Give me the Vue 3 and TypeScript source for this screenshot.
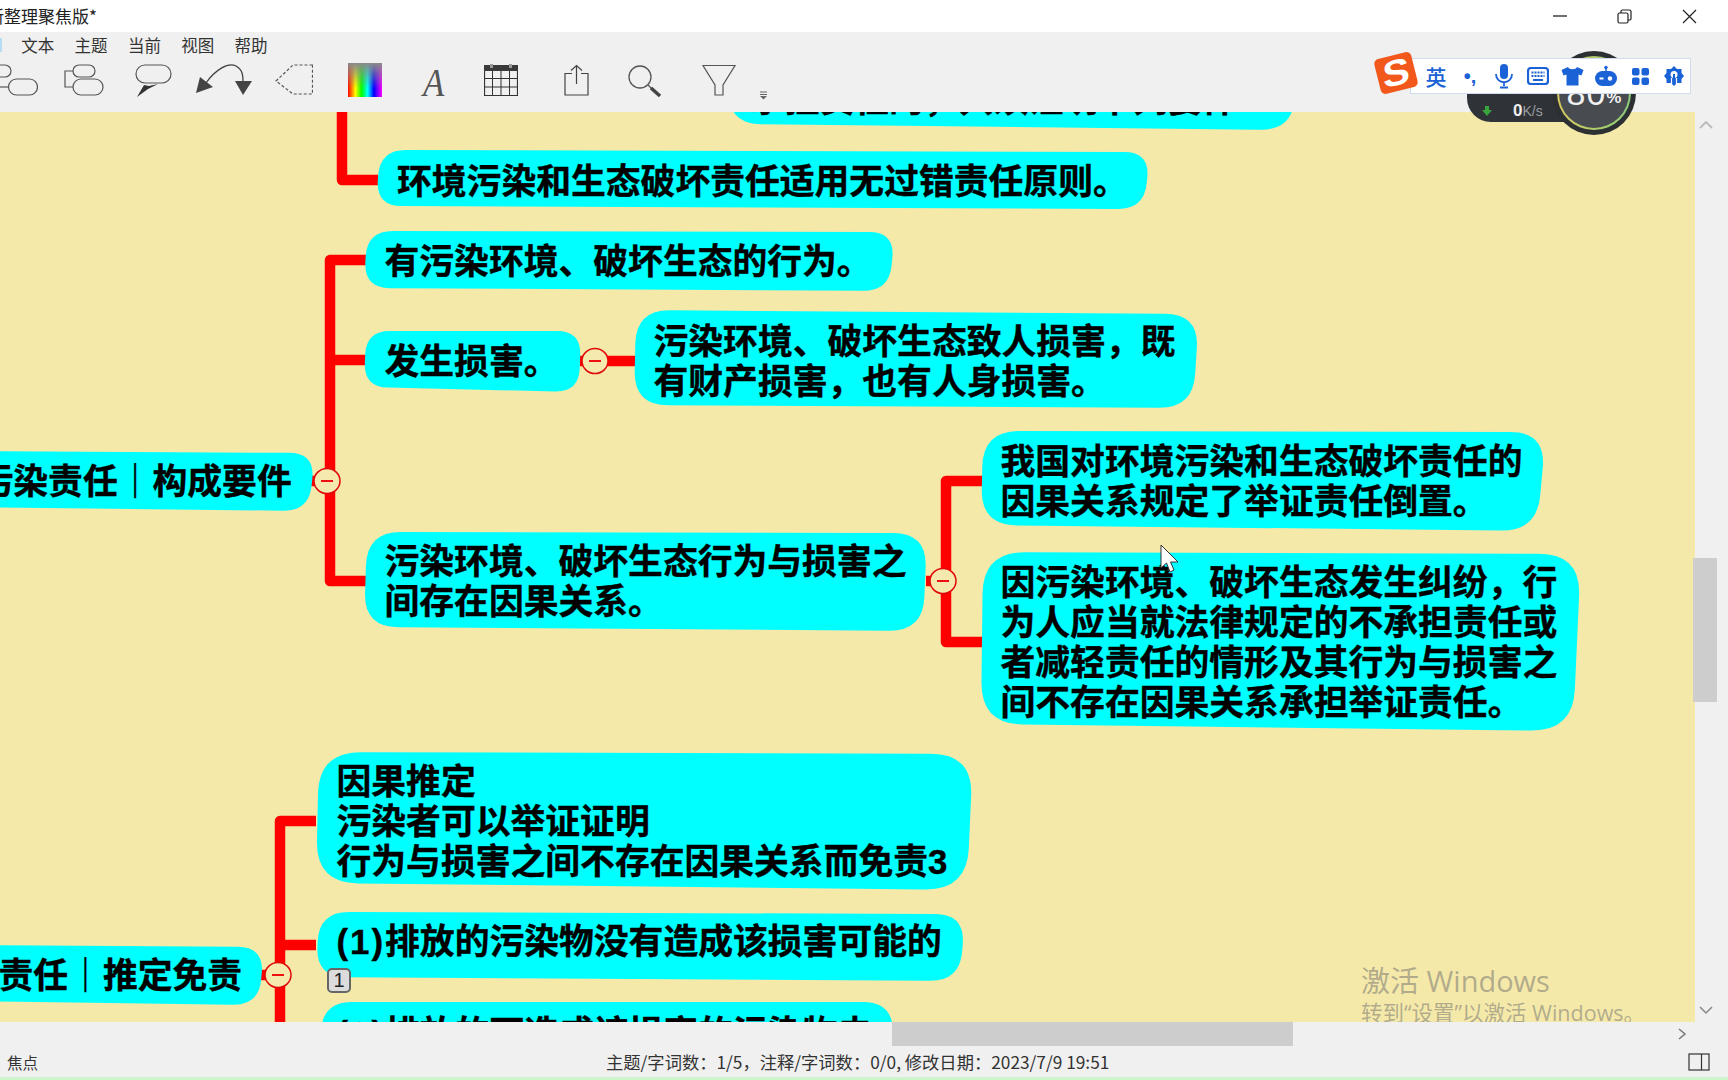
<script setup lang="ts">
interface Topic {
  id: string
  c: number[]
  r: number
  x: number
  y: number
  lead?: string
  lines: string[]
}

const topics: Topic[] = [
  { id: 't0', c: [728, 70, 1295, 70, 1294, 130, 728, 124], r: 34, x: 750, y: 100, lines: ['承担责任的，只须证明下列要件'] },
  { id: 'a', c: [380, 150, 1150, 152, 1144, 209, 376, 206], r: 26, x: 397, y: 182, lines: ['环境污染和生态破坏责任适用无过错责任原则。'] },
  { id: 'b', c: [367, 231, 895, 232, 889, 291, 364, 288], r: 26, x: 384.5, y: 262, lines: ['有污染环境、破坏生态的行为。'] },
  { id: 'c', c: [366, 331, 581, 331, 579, 392, 364, 387], r: 24, x: 384.5, y: 362, lines: ['发生损害。'] },
  { id: 'd', c: [636, 310, 1199, 314, 1193, 408, 634, 405], r: 34, x: 653.5, y: 342, lines: ['污染环境、破坏生态致人损害，既', '有财产损害，也有人身损害。'] },
  { id: 'e', c: [-40, 451, 315, 453, 309, 511, -40, 507], r: 26, x: -21.5, y: 482, lines: ['污染责任｜构成要件'] },
  { id: 'f', c: [367, 532, 927, 533, 923, 631, 364, 627], r: 34, x: 384.5, y: 562, lines: ['污染环境、破坏生态行为与损害之', '间存在因果关系。'] },
  { id: 'g', c: [983, 431, 1546, 432, 1537, 531, 981, 525], r: 36, x: 1000.5, y: 462, lines: ['我国对环境污染和生态破坏责任的', '因果关系规定了举证责任倒置。'] },
  { id: 'h', c: [983, 552, 1581, 554, 1573, 731, 981, 724], r: 42, x: 1000.5, y: 583, lines: ['因污染环境、破坏生态发生纠纷，行', '为人应当就法律规定的不承担责任或', '者减轻责任的情形及其行为与损害之', '间不存在因果关系承担举证责任。'] },
  { id: 'i', c: [319, 752, 973, 754, 967, 890, 316, 883], r: 42, x: 336.5, y: 782, lines: ['因果推定', '污染者可以举证证明', '行为与损害之间不存在因果关系而免责3'] },
  { id: 'j', c: [319, 912, 965, 914, 960, 981, 316, 977], r: 30, x: 336.5, y: 942, lead: '(1)', lines: ['排放的污染物没有造成该损害可能的'] },
  { id: 'k', c: [322, 1002, 893, 1002, 893, 1070, 320, 1070], r: 30, x: 336.5, y: 1034, lead: '(2)', lines: ['排放的可造成该损害的污染物未'] },
  { id: 'l', c: [-40, 945, 264, 947, 259, 1005, -40, 1001], r: 26, x: -1.5, y: 976, lines: ['责任｜推定免责'] },
]

function blob(t: Topic): string {
  const pts: number[][] = []
  for (let i = 0; i < 4; i++) pts.push([t.c[i * 2], t.c[i * 2 + 1]])
  let d = ''
  pts.forEach((p, i) => {
    const prev = pts[(i + 3) % 4]
    const next = pts[(i + 1) % 4]
    const lp = Math.hypot(prev[0] - p[0], prev[1] - p[1])
    const ln = Math.hypot(next[0] - p[0], next[1] - p[1])
    const ax = p[0] + ((prev[0] - p[0]) / lp) * t.r
    const ay = p[1] + ((prev[1] - p[1]) / lp) * t.r
    const bx = p[0] + ((next[0] - p[0]) / ln) * t.r
    const by = p[1] + ((next[1] - p[1]) / ln) * t.r
    d += `${i === 0 ? 'M' : 'L'}${ax} ${ay}Q${p[0]} ${p[1]} ${bx} ${by}`
  })
  return d + 'Z'
}

const CANVAS_TOP = 112
function topicPos(t: Topic) {
  return { left: `${t.x}px`, top: `${t.y - 20 - CANVAS_TOP}px` }
}

const wires: string[] = [
  'M342 100V180H378',
  'M366 260H330V581H366',
  'M330 360H366',
  'M311 481H330',
  'M580 361H636',
  'M982 481H946V642H982',
  'M926 581H946',
  'M316 821H280V1040',
  'M280 945H316',
  'M258 975H280',
]

const toggles: number[][] = [
  [327, 481],
  [595, 361],
  [943, 581],
  [278, 975],
]

const menus: string[] = ['文本', '主题', '当前', '视图', '帮助']
</script>

<template>
  <div class="app">
    <header class="titlebar">
      <span class="title">新整理聚焦版*</span>
      <div class="win-controls">
        <svg width="14" height="14" viewBox="0 0 14 14"><path d="M0 7H14" stroke="#222" stroke-width="1.3" /></svg>
        <svg width="15" height="15" viewBox="0 0 15 15" fill="none" stroke="#222" stroke-width="1.2"><rect x="1" y="4" width="10" height="10" rx="1.5" /><path d="M4 4V2.5A1.5 1.5 0 0 1 5.5 1H12.500A1.500 1.500 0 0 1 14 2.500V9.500A1.500 1.500 0 0 1 12.500 11H11" /></svg>
        <svg width="15" height="15" viewBox="0 0 15 15"><path d="M1 1L14 14M14 1L1 14" stroke="#222" stroke-width="1.2" /></svg>
      </div>
    </header>

    <nav class="menubar">
      <span class="menu-edge"></span>
      <span v-for="m in menus" :key="m" class="menu-item">{{ m }}</span>
    </nav>

    <div class="toolbar">
      <svg class="ic i1" width="38" height="36" viewBox="0 0 38 36" fill="none" stroke="#555" stroke-width="1.2"><rect x="-14" y="1" width="25" height="12" rx="6" /><rect x="8.500" y="15" width="29" height="16" rx="8" /><path d="M0 23H8" /></svg>
      <svg class="ic i2" width="40" height="36" viewBox="0 0 40 36" fill="none" stroke="#555" stroke-width="1.2"><rect x="9" y="1" width="22" height="12" rx="6" /><rect x="9" y="15" width="30" height="16" rx="8" /><path d="M9 7H1V23H9" /></svg>
      <svg class="ic i3" width="37" height="36" viewBox="0 0 37 36"><rect x="1" y="1" width="35" height="18" rx="9" fill="none" stroke="#555" stroke-width="1.2" /><path d="M2 33L9 21L14 22L23 20L13 25Z" fill="#333" /></svg>
      <svg class="ic i4" width="57" height="36" viewBox="0 0 57 36"><path d="M11 19C20 6 33 -2 41 2C48 6 48 12 48 18" fill="none" stroke="#444" stroke-width="1.300" /><path d="M1 29L5 13L18 23Z" fill="#444" /><path d="M40 17H57L48 31Z" fill="#444" /></svg>
      <svg class="ic i5" width="38" height="36" viewBox="0 0 38 36"><path d="M37.500 1H18L1 17L18 30H37.500Z" fill="none" stroke="#555" stroke-width="1.200" stroke-dasharray="3 2" /></svg>
      <div class="ic i6 spectrum"></div>
      <span class="ic i7 glyph-a">A</span>
      <svg class="ic i8" width="34" height="36" viewBox="0 0 34 36"><path d="M0.500 6.500H33.500V31.500H0.500Z" fill="none" stroke="#333" stroke-width="1.200" /><rect x="0" y="1" width="34" height="6" fill="#3a3a3a" /><rect x="6" y="0" width="3" height="4" fill="#999" /><rect x="25" y="0" width="3" height="4" fill="#999" /><path d="M8.500 7V31M17 7V31M25.500 7V31M1 14.500H33M1 23H33" stroke="#333" stroke-width="1" /></svg>
      <svg class="ic i9" width="25" height="36" viewBox="0 0 25 36" fill="none" stroke="#444" stroke-width="1.200"><path d="M8 9.500H1V31H24V9.500H17" /><path d="M12.500 20V1.500M7 6.500L12.500 1.500L18 6.500" /></svg>
      <svg class="ic i10" width="35" height="36" viewBox="0 0 35 36" fill="none" stroke="#555"><circle cx="12" cy="13" r="11" stroke-width="1.300" /><path d="M20 21L24 25" stroke-width="1.300" /><path d="M23 24L32 32" stroke="#444" stroke-width="3.500" /></svg>
      <svg class="ic i11" width="36" height="36" viewBox="0 0 36 36"><path d="M2 1.500H34L22 21V31H14V21Z" fill="none" stroke="#555" stroke-width="1.200" /></svg>
      <svg class="ic i12" width="9" height="36" viewBox="0 0 9 36"><path d="M1 28H8M1 30.500H8" stroke="#666" stroke-width="1" /><path d="M1 32H8L4.500 35.500Z" fill="#666" /></svg>
    </div>

    <main class="workspace">
      <section class="canvas">
        <svg class="map" width="1695" height="910" viewBox="0 112 1695 910">
          <g fill="none" stroke="#ff0000" stroke-width="10.500" stroke-linejoin="round">
            <path v-for="w in wires" :key="w" :d="w" />
          </g>
          <path v-for="t in topics" :key="t.id" :d="blob(t)" fill="#00ffff" />
          <g v-for="p in toggles" :key="p[0]">
            <ellipse :cx="p[0]" :cy="p[1]" rx="13" ry="12.500" fill="#f6e9ad" stroke="#e00808" stroke-width="1.500" />
            <path :d="`M${p[0] - 6} ${p[1]}H${p[0] + 6}`" stroke="#ee1111" stroke-width="2" />
          </g>
        </svg>

        <div v-for="t in topics" :key="t.id + '-text'" class="topic" :style="topicPos(t)">
          <div v-for="line in t.lines" :key="line"><span v-if="t.lead" class="lead">{{ t.lead }}</span>{{ line }}</div>
        </div>

        <span class="marker">1</span>

        <svg class="cursor" width="20" height="30" viewBox="0 0 20 30"><path d="M1 1V24L6.500 19L10 28L14 26L10.500 18H18Z" fill="#fff" stroke="#333" stroke-width="1" /></svg>

        <div class="watermark">
          <div class="wm-title">激活 Windows</div>
          <div class="wm-sub">转到“设置”以激活 Windows。</div>
        </div>
      </section>

      <aside class="vscroll">
        <svg class="chev-up" width="16" height="10" viewBox="0 0 16 10"><path d="M2 8L8 2L14 8" fill="none" stroke="#bbb" stroke-width="1.800" /></svg>
        <div class="vthumb"></div>
        <svg class="chev-down" width="16" height="10" viewBox="0 0 16 10"><path d="M2 2L8 8L14 2" fill="none" stroke="#888" stroke-width="1.500" /></svg>
      </aside>
    </main>

    <div class="hscroll">
      <div class="hthumb"></div>
      <svg class="chev-right" width="10" height="14" viewBox="0 0 10 14"><path d="M2 2L8 7L2 12" fill="none" stroke="#777" stroke-width="1.500" /></svg>
    </div>

    <footer class="statusbar">
      <span class="focus">焦点</span>
      <span class="stats">主题/字词数：1/5，注释/字词数：0/0, 修改日期：2023/7/9 19:51</span>
      <svg class="panel" width="22" height="18" viewBox="0 0 22 18" fill="none" stroke="#333" stroke-width="1.200"><rect x="1" y="1" width="20" height="16" /><path d="M13.500 1V17" /></svg>
    </footer>
    <div class="greenline"></div>

    <div class="speed-pill">
      <svg width="12" height="12" viewBox="0 0 12 12"><path d="M4 1H8V5H11L6 11L1 5H4Z" fill="#3aa53a" /></svg>
      <span class="speed-num">0</span><span class="speed-unit">K/s</span>
    </div>
    <div class="gauge">
      <div class="gauge-ring"><span class="gauge-num">80</span><span class="gauge-pct">%</span></div>
    </div>

    <div class="ime">
      <div class="ime-logo"><span>S</span></div>
      <div class="ime-bar">
        <span class="ime-zh">英</span>
        <span class="ime-punc">•,</span>
        <svg width="20" height="26" viewBox="0 0 20 26"><rect x="6" y="1" width="8" height="15" rx="4" fill="#1a62d6" /><path d="M2 11C2 22 18 22 18 11M10 19V23M6 24.500H14" fill="none" stroke="#1a62d6" stroke-width="1.800" /></svg>
        <svg width="22" height="18" viewBox="0 0 22 18"><rect x="1" y="1" width="20" height="16" rx="3" fill="none" stroke="#1a62d6" stroke-width="2.200" /><path d="M4.500 5.500H17.500M4.500 9H17.500" stroke="#1a62d6" stroke-width="2.200" stroke-dasharray="2 1" /><path d="M6 13H16" stroke="#1a62d6" stroke-width="2" /></svg>
        <svg width="23" height="20" viewBox="0 0 23 20"><path d="M7 1L0.500 4L2.500 9.500L5.500 8.500V19.500H17.500V8.500L20.500 9.500L22.500 4L16 1C15 4 8 4 7 1Z" fill="#1a62d6" /></svg>
        <svg width="24" height="22" viewBox="0 0 24 22"><circle cx="12" cy="2.500" r="1.700" fill="#1a62d6" /><path d="M12 3V7" stroke="#1a62d6" stroke-width="1.500" /><rect x="1" y="6" width="22" height="15" rx="7.500" fill="#1a62d6" /><path d="M5.500 13.500H9.500" stroke="#fff" stroke-width="2" /><circle cx="16" cy="13.500" r="2.200" fill="#fff" /></svg>
        <svg width="19" height="19" viewBox="0 0 19 19" fill="#1a62d6"><rect x="1" y="1" width="7.500" height="7.500" rx="2" /><rect x="10.500" y="1" width="7.500" height="7.500" rx="2" /><rect x="1" y="10.500" width="7.500" height="7.500" rx="2" /><rect x="10.500" y="10.500" width="7.500" height="7.500" rx="2" /></svg>
        <svg width="22" height="22" viewBox="0 0 22 22"><path d="M11 1L14 4H18.500V8L21 11L18.500 14V18H14L11 21L8 18H3.500V14L1 11L3.500 8V4H8Z" fill="#1a62d6" /><circle cx="11" cy="9.500" r="3.500" fill="#fff" /><path d="M11 9V19" stroke="#1a62d6" stroke-width="2" /><path d="M8.500 19V13M13.500 19V13" stroke="#fff" stroke-width="1.200" /></svg>
      </div>
    </div>
  </div>
</template>

<style scoped>
.app {
  position: relative;
  width: 1728px;
  height: 1080px;
  overflow: hidden;
  display: flex;
  flex-direction: column;
  background: #f0f0f0;
  color: #222;
  font-family: "Noto Sans CJK SC", "Liberation Sans", sans-serif;
}
.titlebar {
  height: 32px;
  flex: none;
  display: flex;
  align-items: center;
  background: #fff;
}
.title {
  margin-left: -13px;
  font-size: 17px;
  line-height: 32px;
  color: #222;
}
.win-controls {
  margin-left: auto;
  display: flex;
  align-items: center;
  gap: 50px;
  margin-right: 31px;
}
.menubar {
  height: 26px;
  flex: none;
  display: flex;
  align-items: center;
  gap: 19.300px;
  font-size: 16.500px;
  color: #333;
}
.menu-edge {
  width: 2px;
  height: 14px;
  background: #b5dcf0;
}
.menu-item {
  width: 34px;
  line-height: 26px;
  white-space: nowrap;
}
.toolbar {
  height: 54px;
  flex: none;
  display: flex;
  align-items: flex-start;
  padding-top: 6px;
  box-sizing: border-box;
}
.ic {
  flex: none;
  display: block;
}
.i2 { margin-left: 26px; }
.i3 { margin-left: 31px; }
.i4 { margin-left: 23px; }
.i5 { margin-left: 23px; }
.i6 { margin-left: 35px; }
.i7 { margin-left: 41px; }
.i8 { margin-left: 36px; }
.i9 { margin-left: 46px; }
.i10 { margin-left: 39px; }
.i11 { margin-left: 38px; }
.i12 { margin-left: 22px; }
.spectrum {
  width: 34px;
  height: 34px;
  margin-top: -1px;
  background:
    linear-gradient(to bottom, #8a8a8a 0%, rgba(138, 138, 138, 0) 75%),
    linear-gradient(to right, #ff0000, #ffff00 22%, #00ff00 40%, #00ffff 58%, #0000ff 76%, #ff00ff);
}
.glyph-a {
  width: 25px;
  font-family: "Liberation Serif", serif;
  font-style: italic;
  font-size: 41px;
  line-height: 36px;
  color: #555;
  transform: scaleX(0.85);
  transform-origin: left center;
}
.workspace {
  height: 910px;
  flex: none;
  display: flex;
}
.canvas {
  position: relative;
  width: 1695px;
  flex: none;
  overflow: hidden;
  background: #f5e9aa;
}
.map {
  position: absolute;
  left: 0;
  top: 0;
}
.topic {
  position: absolute;
  font-family: "Liberation Sans", "Noto Sans CJK SC", sans-serif;
  font-weight: 700;
  font-size: 34.800px;
  line-height: 40px;
  white-space: nowrap;
  color: #000;
  -webkit-text-stroke: 0.400px #000;
}
.lead {
  letter-spacing: 2px;
}
.marker {
  position: absolute;
  left: 327px;
  top: 856px;
  width: 24px;
  height: 25px;
  box-sizing: border-box;
  border: 2px solid #666;
  border-radius: 5px;
  background: #dcdcdc;
  font-family: "Liberation Sans", sans-serif;
  font-size: 20px;
  line-height: 21px;
  text-align: center;
  color: #222;
}
.cursor {
  position: absolute;
  left: 1160px;
  top: 432px;
}
.watermark {
  position: absolute;
  left: 1361px;
  top: 850px;
  color: rgba(110, 110, 110, 0.5);
  white-space: nowrap;
  font-family: "Open Sans", "Noto Sans CJK SC", sans-serif;
}
.wm-title {
  font-size: 29px;
  line-height: 38px;
}
.wm-sub {
  font-size: 21.500px;
  line-height: 26px;
}
.vscroll {
  flex: 1;
  display: flex;
  flex-direction: column;
  background: #f0f0f0;
}
.chev-up {
  margin: 8px 0 0 3px;
}
.vthumb {
  width: 24px;
  height: 144px;
  margin: 428px 0 0 -2px;
  background: #cdcdcd;
  position: relative;
}
.chev-down {
  margin: auto 0 7px 3px;
}
.hscroll {
  height: 24px;
  flex: none;
  display: flex;
  align-items: center;
}
.hthumb {
  width: 401px;
  height: 24px;
  margin-left: 892px;
  background: #cdcdcd;
}
.chev-right {
  margin-left: 384px;
}
.statusbar {
  height: 31px;
  flex: none;
  display: flex;
  align-items: center;
  font-size: 17.300px;
  color: #333;
}
.focus {
  margin-left: 7px;
  font-size: 15.500px;
}
.stats {
  margin-left: 568px;
  white-space: nowrap;
}
.panel {
  margin-left: auto;
  margin-right: 18px;
}
.greenline {
  height: 3px;
  flex: none;
  background: #ccf5cc;
}
.speed-pill {
  position: absolute;
  left: 1467px;
  top: 70px;
  width: 110px;
  height: 52px;
  box-sizing: border-box;
  padding: 29px 0 0 14px;
  display: flex;
  align-items: center;
  background: #2f3337;
  border-radius: 0 0 0 24px;
}
.speed-num {
  margin-left: 20px;
  font-family: "Liberation Sans", sans-serif;
  font-weight: 700;
  font-size: 17px;
  color: #eee;
}
.speed-unit {
  font-family: "Liberation Sans", sans-serif;
  font-size: 14px;
  color: #9a9da0;
}
.gauge {
  position: absolute;
  left: 1552px;
  top: 51px;
  width: 84px;
  height: 84px;
  box-sizing: border-box;
  padding: 5px;
  border-radius: 50%;
  background: #2d3033;
}
.gauge-ring {
  width: 74px;
  height: 74px;
  box-sizing: border-box;
  border: 2px solid transparent;
  border-radius: 50%;
  background:
    linear-gradient(#484b50, #484b50) padding-box,
    linear-gradient(to right, #d6c85e, #8ccf7c) border-box;
  display: flex;
  align-items: center;
  justify-content: center;
  color: #f2f2f2;
  font-family: "Liberation Sans", sans-serif;
}
.gauge-num {
  font-size: 34px;
  letter-spacing: 1px;
}
.gauge-pct {
  font-size: 17px;
  margin-top: 10px;
  font-weight: 700;
}
.ime {
  position: absolute;
  left: 1377px;
  top: 52px;
  display: flex;
  align-items: flex-start;
}
.ime-logo {
  position: relative;
  z-index: 1;
  width: 38px;
  height: 36px;
  margin-top: 3px;
  border-radius: 5px;
  transform: rotate(-14deg);
  background: #f2581c;
  display: flex;
  align-items: center;
  justify-content: center;
  color: #fff;
  font-family: "Liberation Sans", sans-serif;
  font-weight: 700;
  font-size: 36px;
  line-height: 36px;
}
.ime-logo span {
  display: block;
  transform: scaleX(1.150) skewX(-8deg);
}
.ime-bar {
  width: 281px;
  height: 36px;
  margin: 6px 0 0 -5px;
  box-sizing: border-box;
  padding-left: 8px;
  display: grid;
  grid-template-columns: repeat(8, 34px);
  align-items: center;
  justify-items: center;
  background: #fff;
  border: 1px solid #cfdcee;
  color: #1a62d6;
}
.ime-zh {
  font-size: 21px;
  font-weight: 500;
}
.ime-punc {
  font-family: "Liberation Sans", sans-serif;
  font-size: 20px;
  font-weight: 700;
}
</style>

<style>
html,
body {
  margin: 0;
  overflow: hidden;
}
</style>
